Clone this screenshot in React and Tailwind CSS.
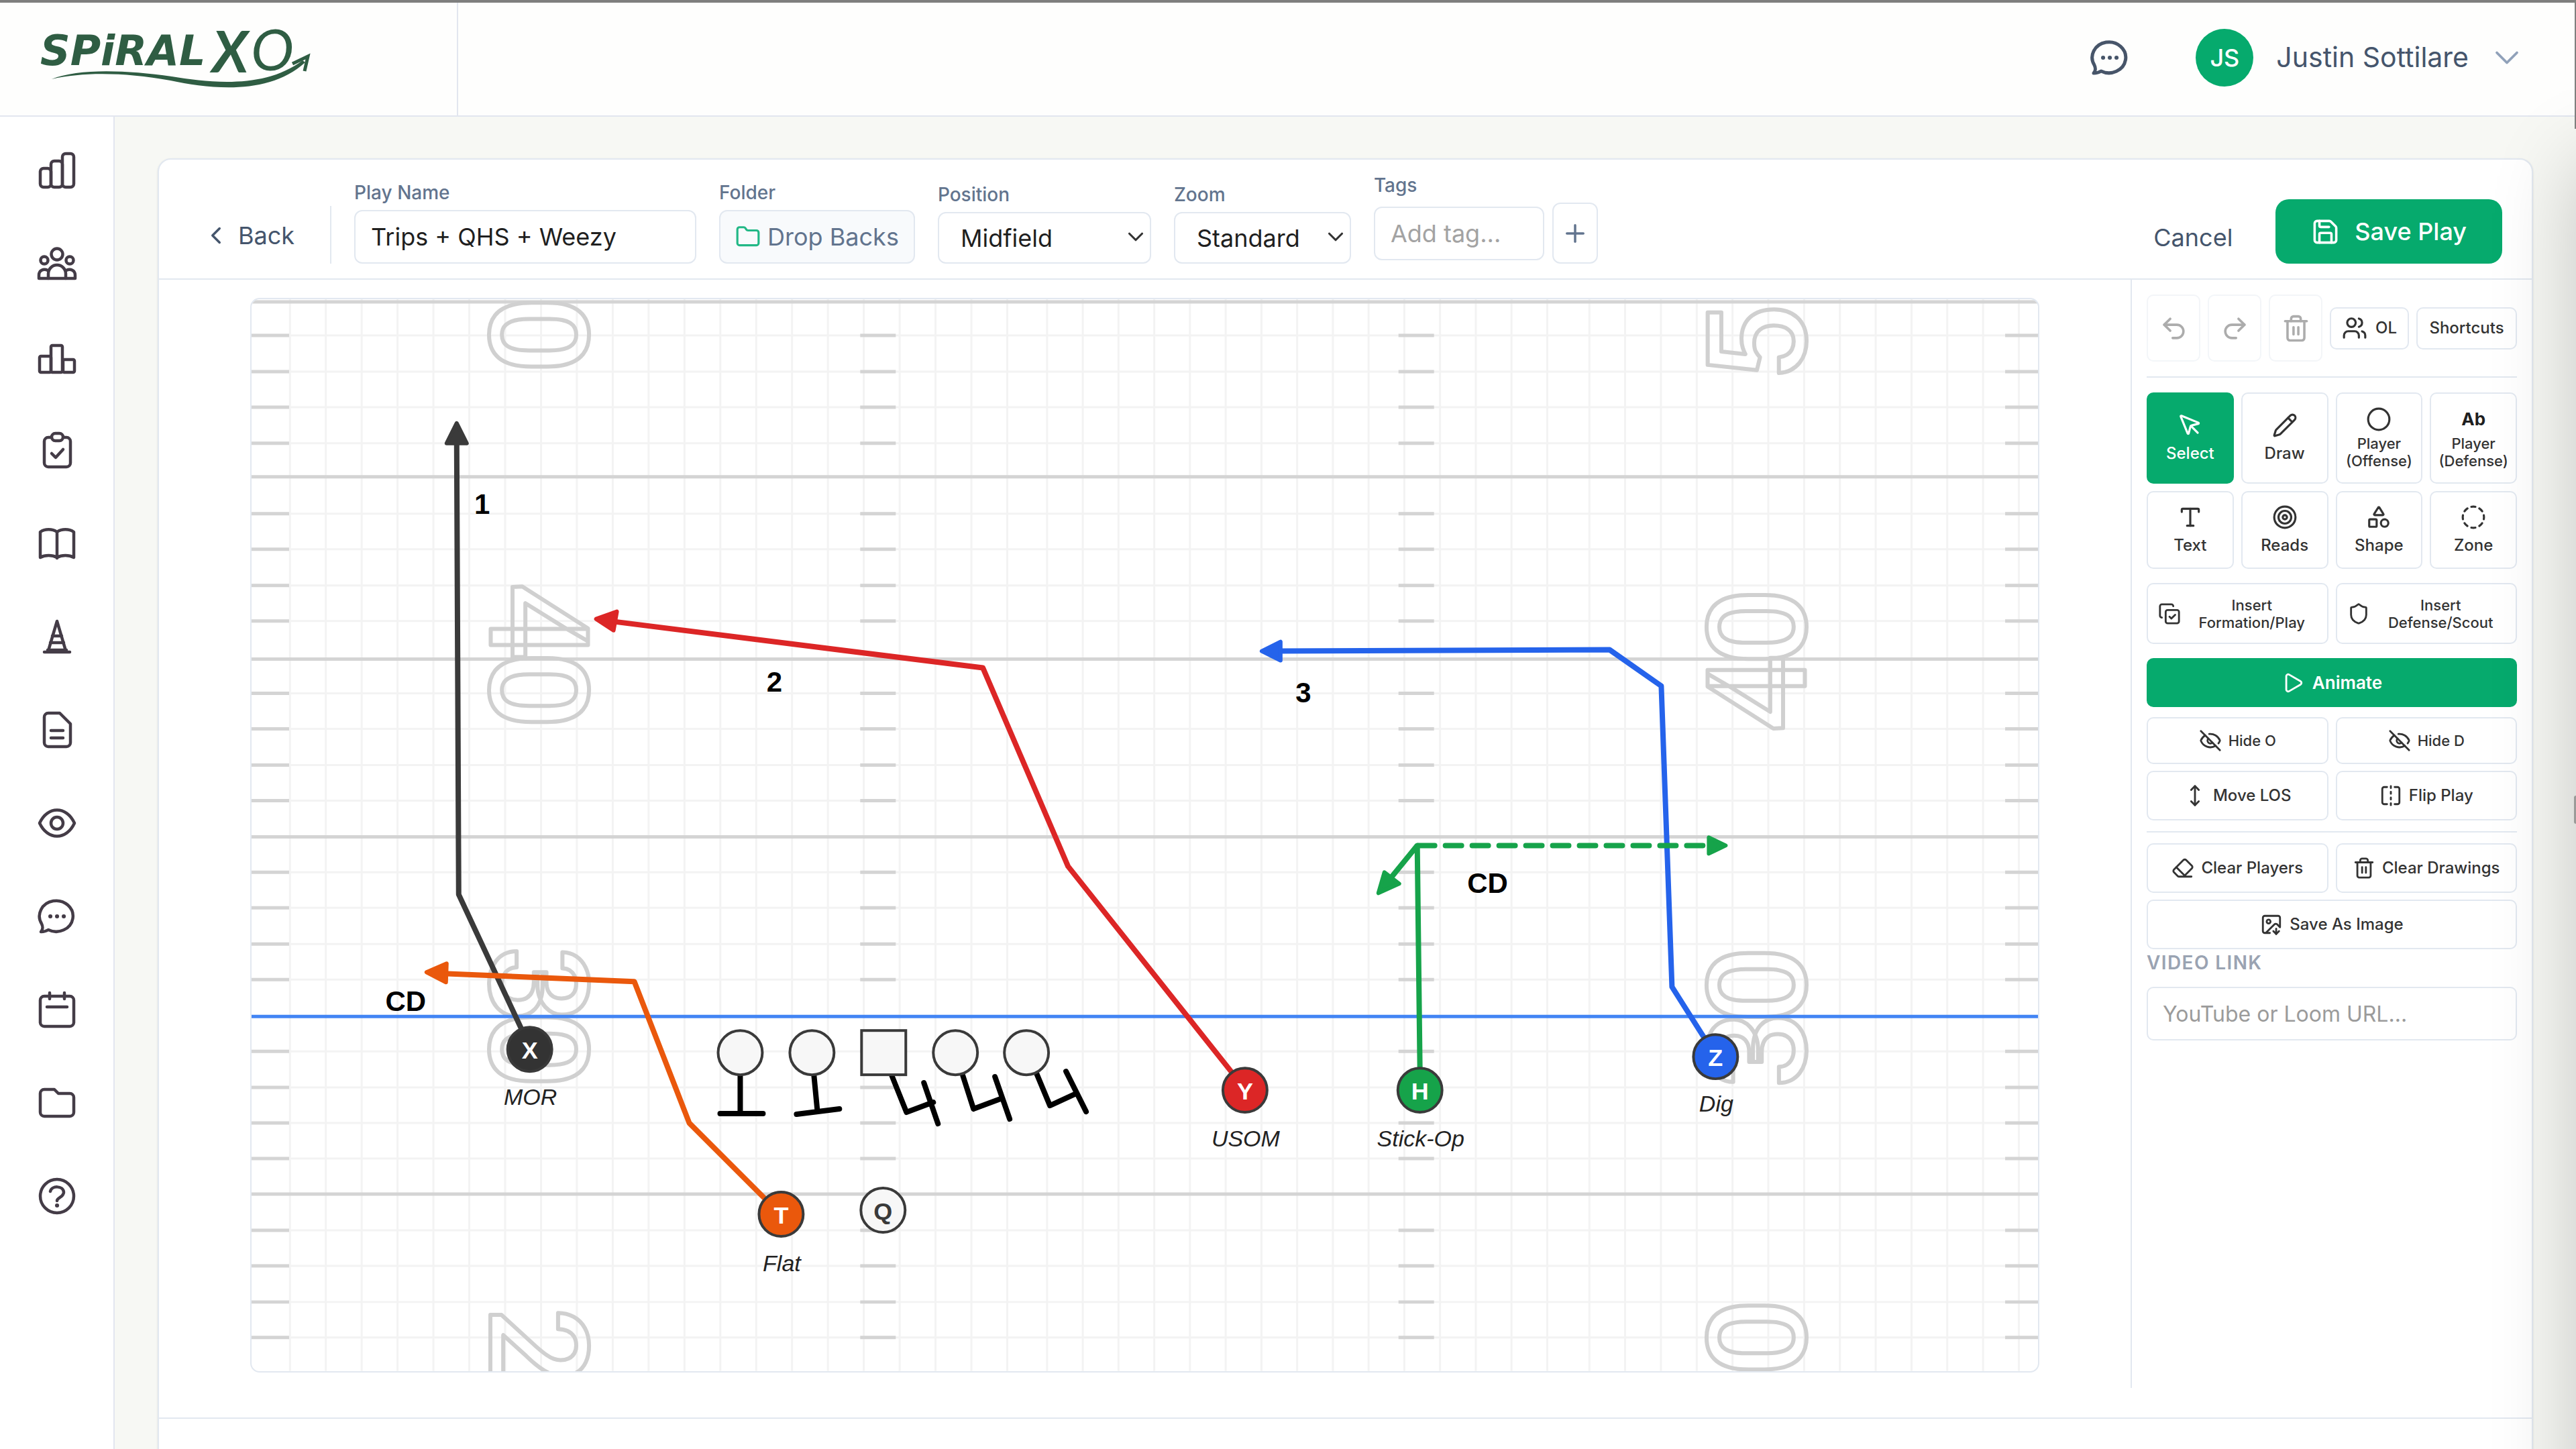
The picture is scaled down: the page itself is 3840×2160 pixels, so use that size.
import React, { useState } from 'react';
import {
  ChevronDown, ChevronLeft, Circle, CircleDashed, CopyCheck, Eraser, EyeOff, FlipHorizontal, Folder,
  ImageDown, MousePointer, MoveVertical, Pencil, Play, Plus, Redo2, Save, Shapes, Shield,
  Target, Trash2, Type, Undo2, Users,
} from 'lucide-react';

const navItems = [
  {
    id: 'dashboard',
    label: 'Dashboard',
    icon: (
      <>
        <rect x="-25" y="-3" width="16" height="28" rx="5" />
        <rect x="-9" y="-14" width="17" height="39" rx="5" />
        <rect x="8" y="-25" width="17" height="50" rx="5" />
      </>
    ),
  },
  {
    id: 'roster',
    label: 'Roster',
    icon: (
      <>
        <circle cx="0" cy="-14" r="8.5" />
        <circle cx="-19" cy="-5" r="5.5" />
        <circle cx="19" cy="-5" r="5.5" />
        <path d="M-13 22v-7a13 13 0 0 1 26 0v7" />
        <path d="M-14 10c-6-3-13 0-13 7v5H27v-5c0-7-7-10-13-7" />
      </>
    ),
  },
  {
    id: 'rankings',
    label: 'Rankings',
    icon: (
      <>
        <rect x="-26" y="-1" width="17" height="24" rx="2" />
        <rect x="-9" y="-17" width="17" height="40" rx="2" />
        <rect x="9" y="4" width="17" height="19" rx="2" />
      </>
    ),
  },
  {
    id: 'tasks',
    label: 'Tasks',
    icon: (
      <>
        <rect x="-8" y="-25" width="17" height="11" rx="5.5" />
        <path d="M-8-19h-5a6 6 0 0 0-6 6v32a6 6 0 0 0 6 6h27a6 6 0 0 0 6-6v-32a6 6 0 0 0-6-6h-5" />
        <path d="m-8 5 6 6L9-1" />
      </>
    ),
  },
  {
    id: 'playbook',
    label: 'Playbook',
    icon: (
      <path d="M0-17v39M0-17c-7-5-18-5-25 0v38c7-4 18-4 25 0 7-4 18-4 25 0v-38c-7-5-18-5-25 0z" />
    ),
  },
  {
    id: 'drills',
    label: 'Drills',
    icon: (
      <>
        <path d="M-13 21 0-23 13 21" />
        <path d="M-7-1H7M-10 9h20M-19 23h38M-14 20h28" />
      </>
    ),
  },
  {
    id: 'reports',
    label: 'Reports',
    icon: (
      <>
        <path d="M4-25h-17a6 6 0 0 0-6 6v38a6 6 0 0 0 6 6h27a6 6 0 0 0 6-6V-9z" />
        <path d="M-9 1H9M-9 12H9" />
      </>
    ),
  },
  {
    id: 'scouting',
    label: 'Scouting',
    icon: (
      <>
        <path d="M-26 0C-14-26 14-26 26 0 14 26-14 26-26 0z" />
        <circle cx="0" cy="0" r="9" />
      </>
    ),
  },
  {
    id: 'messages',
    label: 'Messages',
    icon: (
      <>
        <path d="M-24 23c3-3 3-8 1-12A25 23 0 1 1-13 20c-3 2-7 3-11 3z" />
        <path d="M-10 0h.1M0 0h.1M10 0h.1" strokeWidth="6" />
      </>
    ),
  },
  {
    id: 'calendar',
    label: 'Calendar',
    icon: (
      <>
        <rect x="-25" y="-20" width="50" height="45" rx="6" />
        <path d="M-11-25v9M11-25v9M-15-4h30" />
      </>
    ),
  },
  {
    id: 'files',
    label: 'Files',
    icon: (
      <path d="M-25-14a6 6 0 0 1 6-6h15l6 6h17a6 6 0 0 1 6 6v22a6 6 0 0 1-6 6h-38a6 6 0 0 1-6-6z" />
    ),
  },
  {
    id: 'help',
    label: 'Help',
    icon: (
      <>
        <circle cx="0" cy="0" r="25" />
        <path d="M-10-7c2-9 19-9 20 1C10 2 0 2 0 7" />
        <path d="M0 14h.1" strokeWidth="6" />
      </>
    ),
  },
];

const tools = [
  { id: 'select', label: 'Select', icon: MousePointer },
  { id: 'draw', label: 'Draw', icon: Pencil },
  { id: 'offense', label: 'Player', detail: '(Offense)', icon: Circle },
  { id: 'defense', label: 'Player', detail: '(Defense)' },
  { id: 'text', label: 'Text', icon: Type },
  { id: 'reads', label: 'Reads', icon: Target },
  { id: 'shape', label: 'Shape', icon: Shapes },
  { id: 'zone', label: 'Zone', icon: CircleDashed },
];

const range = (start, step, count) => Array.from({ length: count }, (_, i) => start + step * i);
const gridX = [...range(431.3, 53.5, 21), ...range(1560.7, 53.3, 15), ...range(2369.7, 53.4, 13)];
const hashY = [498, 552, 605, 659, 764, 817, 871, 924, 1032, 1085, 1139, 1192, 1299, 1352, 1406, 1459, 1566, 1620, 1673, 1726, 1833, 1886, 1940, 1993];
const yardY = [448, 709, 981, 1246, 1779];

const leftDigits = [['0', 497], ['4', 925], ['0', 1027], ['3', 1467], ['0', 1563], ['2', 2006]];
const rightDigits = [['5', 509], ['0', 933], ['4', 1032], ['0', 1467], ['3', 1563], ['0', 1993]];

const routes = [
  { color: '#3a3a3a', line: '680,655 683,1332 780,1540', head: '680,629 695,659 665,659' },
  { color: '#dc2626', line: '915,925 1465,994 1592,1290 1840,1602', head: '888,921 919,910 914,938' },
  { color: '#ea580c', line: '660,1450 945,1462 1027,1673 1142,1788', head: '635,1448 665,1435 664,1463' },
  { color: '#16a34a', line: '2117,1595 2113,1259 2073,1308', head: '2055,1330 2064,1299 2086,1316' },
  { color: '#2563eb', line: '1905,969 2400,967 2477,1021 2493,1470 2545,1552', head: '1881,969 1909,955 1909,983' },
];

const players = [
  { id: 'X', x: 789, y: 1563, fill: '#333333', text: '#ffffff', tag: 'MOR', tagY: 1646 },
  { id: 'Y', x: 1856, y: 1624, fill: '#dc2626', text: '#ffffff', tag: 'USOM', tagY: 1708 },
  { id: 'H', x: 2117, y: 1624, fill: '#16a34a', text: '#ffffff', tag: 'Stick-Op', tagY: 1708 },
  { id: 'Z', x: 2558, y: 1574, fill: '#2563eb', text: '#ffffff', tag: 'Dig', tagY: 1656 },
  { id: 'T', x: 1164, y: 1809, fill: '#ea580c', text: '#ffffff', tag: 'Flat', tagY: 1894 },
  { id: 'Q', x: 1316, y: 1803, fill: '#f7f7f7', text: '#3a3a3a' },
];

const notes = [
  ['1', 718, 764], ['2', 1154, 1029], ['3', 1943, 1045], ['CD', 604, 1506], ['CD', 2218, 1330],
];

const Logo = () => (
  <svg viewBox="0 -40 430 140" className="h-[140px] w-[430px]" role="img" aria-label="SpiralXO">
    <g fill="#2f5d43" className="font-['DejaVu_Sans'] font-bold italic">
      <text x="4" y="53" fontSize="62">SPiRAL</text>
    </g>
    <g fill="#2f5d43" className="font-['Lato'] italic">
      <text x="260" y="64" fontSize="86" fontWeight="700">X</text>
      <text x="318" y="61" fontSize="86" fontWeight="400">O</text>
    </g>
    <path d="M21 74C60 58 130 60 200 70c60 10 140 18 195-24l4 3C345 98 260 89 198 76 130 64 70 63 21 74z" fill="#2f5d43" />
    <path d="m380 51 23-11-5 22" fill="none" stroke="#2f5d43" strokeWidth="5" />
  </svg>
);

const Header = () => (
  <header className="flex shrink-0 items-stretch justify-between border-t-4 border-b-2 border-t-[#7f7f7e] border-b-[#e2e6ef] bg-[#fefefd]">
    <a href="#home" className="flex w-[683px] items-start border-r-2 border-[#e2e6ef] pl-[56px]">
      <Logo />
    </a>
    <div className="flex h-[168px] items-center pr-[73px] pb-[4px]">
      <button aria-label="Messages" className="mr-[98px]">
        <svg viewBox="-30 -30 60 60" className="size-[60px]" fill="none" stroke="#475569" strokeWidth="5" strokeLinecap="round" strokeLinejoin="round">
          <path d="M-24 23c3-3 3-8 1-12A25 23 0 1 1-13 20c-3 2-7 3-11 3z" />
          <path d="M-10 0h.1M0 0h.1M10 0h.1" strokeWidth="6" />
        </svg>
      </button>
      <button className="flex items-center">
        <span className="flex size-[86px] items-center justify-center rounded-full bg-[#06aa6d] text-[36px] font-medium text-white">
          JS
        </span>
        <span className="ml-[34px] text-[41px] text-slate-600">Justin Sottilare</span>
        <ChevronDown className="ml-[27px] size-[60px] text-slate-400" strokeWidth={1.5} />
      </button>
    </div>
  </header>
);

const Sidebar = () => (
  <nav className="flex w-[171px] shrink-0 flex-col items-center gap-[79px] border-r-2 border-[#e2e6ef] bg-white pt-[50px]">
    {navItems.map((item) => (
      <a key={item.id} href={`#${item.id}`} aria-label={item.label}>
        <svg viewBox="-30 -30 60 60" className="size-[60px]" fill="none" stroke="#443c47" strokeWidth="4.5" strokeLinecap="round" strokeLinejoin="round">
          {item.icon}
        </svg>
      </a>
    ))}
  </nav>
);

const Field = ({ id, label, children }) => (
  <div className="flex flex-col">
    <label htmlFor={id} className="mb-2 text-[28px] leading-[36px] font-medium text-slate-500">{label}</label>
    {children}
  </div>
);

const SelectBox = ({ id, options, className }) => (
  <div className={`relative ${className}`}>
    <select
      id={id}
      className="h-[77px] w-full appearance-none rounded-[12px] border-2 border-slate-200 bg-white pl-[32px] text-[36px] text-[#1f1f1f]"
    >
      {options.map((option) => (
        <option key={option}>{option}</option>
      ))}
    </select>
    <ChevronDown className="pointer-events-none absolute top-[18px] right-1 size-[38px] text-[#333]" />
  </div>
);

const Toolbar = () => {
  const [name, setName] = useState('Trips + QHS + Weezy');
  return (
    <div className="flex items-end justify-between border-b-2 border-slate-200 px-[44px] pt-[20px] pb-[22px]">
      <div className="flex items-end gap-[34px] pl-[20px]">
        <button className="flex h-[84px] items-center gap-3 text-[36px] text-slate-600">
          <ChevronLeft className="size-[42px]" />
          Back
        </button>
        <div className="ml-[19px] h-[86px] w-[2px] bg-slate-200" />
        <Field id="play-name" label="Play Name">
          <input
            id="play-name"
            value={name}
            onChange={(e) => setName(e.target.value)}
            className="h-[80px] w-[510px] rounded-[12px] border-2 border-slate-200 px-[23px] text-[36px] text-[#1f1f1f]"
          />
        </Field>
        <Field id="folder" label="Folder">
          <button
            id="folder"
            className="flex h-[80px] items-center gap-[10px] rounded-[12px] border-2 border-slate-200 bg-slate-50 px-[22px] text-[36px] text-slate-500"
          >
            <Folder className="size-[38px] text-[#22b886]" />
            Drop Backs
          </button>
        </Field>
        <Field id="position" label="Position">
          <SelectBox id="position" options={['Midfield']} className="w-[318px]" />
        </Field>
        <Field id="zoom" label="Zoom">
          <SelectBox id="zoom" options={['Standard']} className="w-[264px]" />
        </Field>
        <Field id="tags" label="Tags">
          <div className="flex items-center gap-[12px]">
            <input
              id="tags"
              placeholder="Add tag..."
              className="h-[80px] w-[254px] rounded-[12px] border-2 border-slate-200 px-[23px] text-[36px] placeholder:text-[#a3a3a3]"
            />
            <button aria-label="Add tag" className="flex h-[91px] w-[68px] items-center justify-center rounded-[12px] border-2 border-slate-200 text-slate-500">
              <Plus className="size-[42px]" />
            </button>
          </div>
        </Field>
      </div>
      <div className="flex items-center">
        <button className="mr-[64px] pt-[18px] text-[36px] text-slate-600">Cancel</button>
        <button className="flex h-[96px] items-center gap-[22px] rounded-[20px] bg-[#06aa6d] px-[53px] text-[36px] font-medium text-white">
          <Save className="size-[43px]" />
          Save Play
        </button>
      </div>
    </div>
  );
};

const YardDigit = ({ x, y, turn, children }) => (
  <text
    transform={`translate(${x} ${y}) rotate(${turn})`}
    textAnchor="middle"
    fontSize="204"
    fontWeight="500"
    className="font-['Roboto',sans-serif]"
  >
    {children}
  </text>
);

const PlayField = () => (
  <div className="flex-1 px-[136px] pt-[27px]">
    <svg viewBox="374 444 2665 1599" className="w-full rounded-[14px] border-2 border-slate-200 bg-white font-['Liberation_Sans',Arial,sans-serif]">
      <g stroke="#f3f3f3" strokeWidth="3">
        {gridX.map((x) => <line key={x} x1={x} x2={x} y1="444" y2="2043" />)}
        {hashY.map((y) => <line key={y} x1="374" x2="3039" y1={y} y2={y} />)}
      </g>
      <g stroke="#d4d4d4" strokeWidth="5">
        {yardY.map((y) => <line key={y} x1="374" x2="3039" y1={y} y2={y} />)}
        {hashY.map((y) => (
          <path key={y} d={`M374 ${y}h56M1282 ${y}h53M2085 ${y}h53M2990 ${y}h49`} />
        ))}
      </g>
      <g fill="none" stroke="#d0d0d0" strokeWidth="6" strokeLinejoin="round">
        {leftDigits.map(([digit, y]) => <YardDigit key={y} x={730} y={y} turn={90}>{digit}</YardDigit>)}
        {rightDigits.map(([digit, y]) => <YardDigit key={y} x={2692} y={y} turn={-90}>{digit}</YardDigit>)}
      </g>

      {/* Line of scrimmage */}
      <line x1="374" x2="3039" y1="1514" y2="1514" stroke="#4285f4" strokeWidth="5" />

      {/* Blocking assignments */}
      <g fill="none" stroke="#000" strokeWidth="8" strokeLinecap="round" strokeLinejoin="round">
        <path d="M1103 1601v58M1073 1659h64" />
        <path d="m1213 1602 5 52M1187 1660l64-8" />
        <path d="m1329 1602 22 55 40-15M1377 1613l21 61" />
        <path d="m1435 1602 16 50 43-16M1483 1604l22 63" />
        <path d="m1545 1599 20 48 39-18M1589 1596l30 60" />
      </g>
      <g fill="#f7f7f7" stroke="#3a3a3a" strokeWidth="4">
        {[1103, 1210, 1424, 1530].map((x) => <circle key={x} cx={x} cy="1568" r="33" />)}
        <rect x="1284" y="1535" width="66" height="66" />
      </g>

      {routes.map((route) => (
        <g key={route.color} stroke={route.color} strokeLinejoin="round">
          <polyline points={route.line} fill="none" strokeWidth="8" />
          <polygon points={route.head} fill={route.color} strokeWidth="6" />
        </g>
      ))}
      <g stroke="#16a34a" strokeLinejoin="round" strokeLinecap="round">
        <line x1="2115" x2="2542" y1="1259" y2="1259" strokeWidth="8" strokeDasharray="24 16" />
        <polygon points="2573,1259 2548,1247 2548,1271" fill="#16a34a" strokeWidth="6" />
      </g>

      {players.map((player) => (
        <g key={player.id} textAnchor="middle">
          <circle cx={player.x} cy={player.y} r="33" fill={player.fill} stroke="#3a3a3a" strokeWidth="4" />
          <text x={player.x} y={player.y + 14} fontSize="36" fontWeight="700" fill={player.text}>{player.id}</text>
          <text x={player.x + 1} y={player.tagY} fontSize="34" fontStyle="italic" fill="#222">{player.tag}</text>
        </g>
      ))}
      <g textAnchor="middle" fontSize="42" fontWeight="700" fill="#000">
        {notes.map(([text, x, y]) => <text key={x} x={x} y={y}>{text}</text>)}
      </g>
    </svg>
  </div>
);

const PanelButton = ({ icon: Icon, children, className = 'h-[74px] justify-center text-[24px]' }) => (
  <button className={`flex items-center gap-[10px] rounded-[10px] border-2 border-slate-200 bg-white font-medium text-[#333] ${className}`}>
    <Icon className="size-[34px] shrink-0" />
    {children}
  </button>
);

const ToolPanel = () => {
  const [activeTool, setActiveTool] = useState('select');
  return (
    <aside className="flex w-[598px] shrink-0 flex-col border-l-2 border-slate-200 px-[22px] pt-[22px]">
      <div className="flex items-center gap-[11px]">
        {[['Undo', Undo2], ['Redo', Redo2], ['Delete', Trash2]].map(([label, Icon]) => (
          <button key={label} aria-label={label} disabled className="flex h-[100px] w-[80px] items-center justify-center rounded-[10px] border-2 border-slate-200 text-[#333] opacity-40">
            <Icon className="size-[43px]" />
          </button>
        ))}
        <button className="flex h-[63px] flex-1 items-center justify-center gap-[12px] rounded-[10px] border-2 border-slate-200 text-[24px] font-medium text-[#333]">
          <Users className="size-[38px]" />
          OL
        </button>
        <button className="h-[63px] w-[150px] rounded-[10px] border-2 border-slate-200 text-[24px] font-medium text-[#333]">
          Shortcuts
        </button>
      </div>

      <hr className="mt-[22px] mb-[22px] border-t-2 border-slate-200" />

      <div className="grid grid-cols-4 gap-[11px]">
        {tools.map(({ id, label, detail, icon: Icon }, index) => (
          <button
            key={id}
            onClick={() => setActiveTool(id)}
            className={`flex flex-col items-center justify-center rounded-[10px] border-2 font-medium ${
              index < 4 ? 'h-[136px]' : 'h-[116px]'
            } ${detail ? 'gap-[4px] text-[22px] leading-[26px]' : 'gap-[8px] text-[24px] leading-[30px]'} ${
              id === activeTool ? 'border-[#06aa6d] bg-[#06aa6d] text-white' : 'border-slate-200 bg-white text-[#333]'
            }`}
          >
            {Icon ? <Icon className="size-[38px]" /> : <span className="text-[26px] leading-[38px] font-bold text-[#1f1f1f]">Ab</span>}
            <span>
              {label}
              {detail && <><br />{detail}</>}
            </span>
          </button>
        ))}
      </div>

      <div className="mt-[21px] grid grid-cols-2 gap-[11px]">
        <PanelButton icon={CopyCheck} className="h-[91px] pr-[16px] pl-[15px] text-[22px] leading-[26px]">
          <span className="flex-1">Insert<br />Formation/Play</span>
        </PanelButton>
        <PanelButton icon={Shield} className="h-[91px] pr-[16px] pl-[15px] text-[22px] leading-[26px]">
          <span className="flex-1">Insert<br />Defense/Scout</span>
        </PanelButton>
      </div>

      <button className="mt-[21px] flex h-[73px] items-center justify-center gap-[12px] rounded-[10px] bg-[#06aa6d] text-[26px] font-semibold text-white">
        <Play className="size-[34px]" />
        Animate
      </button>

      <div className="mt-[15px] grid grid-cols-2 gap-x-[11px] gap-y-[10px]">
        <PanelButton icon={EyeOff} className="h-[70px] justify-center text-[22px]">Hide O</PanelButton>
        <PanelButton icon={EyeOff} className="h-[70px] justify-center text-[22px]">Hide D</PanelButton>
        <PanelButton icon={MoveVertical}>Move LOS</PanelButton>
        <PanelButton icon={FlipHorizontal}>Flip Play</PanelButton>
      </div>

      <hr className="my-[16px] border-t-2 border-slate-200" />

      <div className="grid grid-cols-2 gap-x-[11px] gap-y-[10px]">
        <PanelButton icon={Eraser}>Clear Players</PanelButton>
        <PanelButton icon={Trash2}>Clear Drawings</PanelButton>
        <PanelButton icon={ImageDown} className="col-span-2 h-[74px] justify-center text-[24px]">Save As Image</PanelButton>
      </div>

      <label htmlFor="video-link" className="mt-[2px] text-[28px] leading-[36px] font-semibold tracking-wider text-[#9aa3b2]">
        VIDEO LINK
      </label>
      <input
        id="video-link"
        placeholder="YouTube or Loom URL..."
        className="mt-[18px] mb-[518px] h-[80px] rounded-[10px] border-2 border-slate-200 px-[22px] text-[32px] placeholder:text-[#9b9b9b]"
      />
    </aside>
  );
};

export default function App() {
  return (
    <div className="relative flex h-screen flex-col overflow-hidden bg-[#f7f8f4] font-['Inter',sans-serif]">
      <Header />
      <div className="flex min-h-0 flex-1">
        <Sidebar />
        <main className="min-w-0 flex-1 overflow-hidden px-[64px] pt-[62px]">
          <div className="rounded-[20px] border-2 border-slate-200 bg-white shadow-sm">
            <Toolbar />
            <div className="flex pb-[44px]">
              <PlayField />
              <ToolPanel />
            </div>
            <div className="h-[160px] border-t-2 border-slate-200" />
          </div>
        </main>
      </div>

      <div className="pointer-events-none absolute top-[240px] -bottom-40 left-full w-[400px] shadow-[0_0_120px_rgba(0,0,0,0.2)]" />
      <div className="pointer-events-none absolute top-0 right-0 h-[192px] w-[2px] bg-[#7f7f7e]" />
      <div className="pointer-events-none absolute top-[1186px] right-0 h-[42px] w-[3px] rounded-l-full bg-[#9a9a98]" />
    </div>
  );
}
